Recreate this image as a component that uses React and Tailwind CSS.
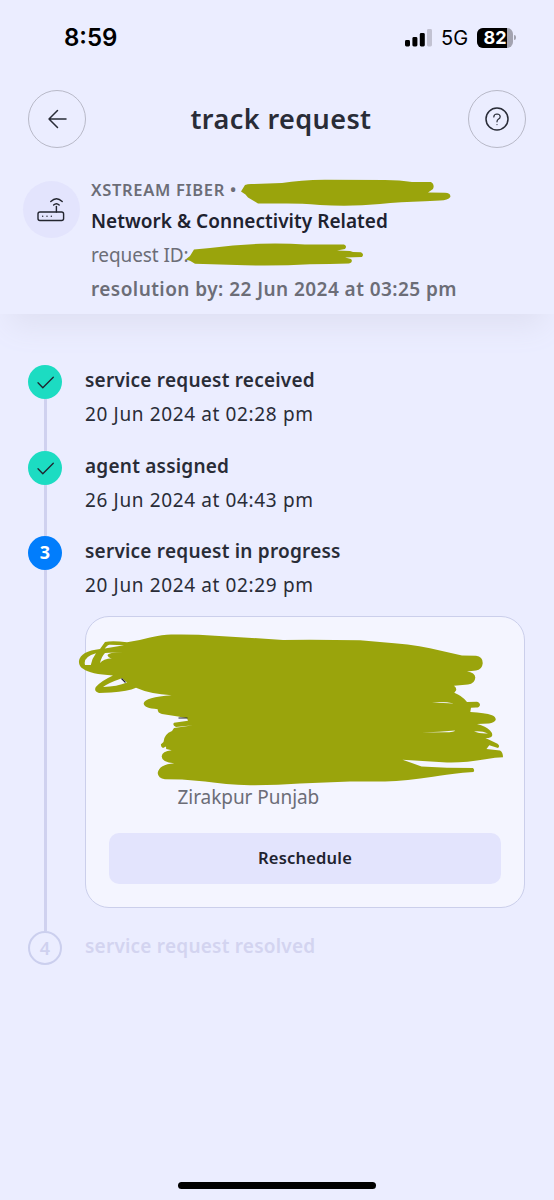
import React from 'react';

const STEPS = [
    { id: 1, state: 'done', title: 'service request received', date: '20 Jun 2024 at 02:28 pm' },
    { id: 2, state: 'done', title: 'agent assigned', date: '26 Jun 2024 at 04:43 pm' },
    { id: 3, state: 'active', title: 'service request in progress', date: '20 Jun 2024 at 02:29 pm' },
    { id: 4, state: 'pending', title: 'service request resolved' },
];

const StatusBar = () => (
    <div className="flex h-[74px] items-center justify-between pl-[64px] pr-[38px] pt-px font-['Inter',sans-serif] text-black">
        <span className="pt-px text-[24px] font-semibold leading-none">8:59</span>
        <div className="flex items-center">
            <svg className="h-[18px] w-[28px]" viewBox="0 0 28 18">
                <rect x="1" y="11" width="5" height="6.5" rx="1.4" />
                <rect x="8.4" y="8" width="5" height="9.5" rx="1.4" />
                <rect x="15.8" y="4" width="5" height="13.5" rx="1.4" />
                <rect x="23" y="0" width="5" height="17.5" rx="1.4" fill="#c2c2d2" />
            </svg>
            <span className="ml-[9px] w-[27px] pt-px text-[20px] leading-none">5G</span>
            <div className="ml-[9px] flex items-center">
                <div className="flex h-[20px] w-[36px] items-center overflow-hidden rounded-[6px] bg-[#a3a3b0]">
                    <div className="flex h-full w-[30px] items-center justify-center bg-black pl-[6px] text-[18px] font-bold leading-none text-white">82</div>
                </div>
                <div className="ml-[1px] h-[5px] w-[2px] rounded-r-full bg-[#a3a3b0]"></div>
            </div>
        </div>
    </div>
);

const RouterIcon = () => (
    <svg className="h-[28px] w-[30px]" viewBox="37 196 30 28" fill="none" stroke="#23252f" strokeWidth="1.4" strokeLinecap="round">
        <rect x="38" y="212" width="25.6" height="8.5" rx="2" />
        <path d="M56.4 206.5V212" />
        <path d="M53.6 205Q56.4 202.4 59.2 205" />
        <path d="M50.8 201.4Q56.5 195.9 62.2 201.4" />
        <path d="M42.7 216.2h.01M47 216.2h.01M51.3 216.2h.01" />
    </svg>
);

const StepMarker = ({ step }) => {
    if (step.state === 'done') {
        return (
            <div className="flex size-[34px] shrink-0 items-center justify-center rounded-full bg-[#1cdcc2]">
                <svg className="size-[34px]" viewBox="0 0 34 34" fill="none" stroke="#20242f" strokeWidth="1.3" strokeLinecap="round" strokeLinejoin="round">
                    <path d="M10 17.8L14.8 22.8L25.3 12.3" />
                </svg>
            </div>
        );
    }
    if (step.state === 'active') {
        return <div className="flex size-[34px] shrink-0 items-center justify-center rounded-full bg-[#017dfc] pb-px text-[18px] font-bold text-white">{step.id}</div>;
    }
    return <div className="flex size-[34px] shrink-0 items-center justify-center rounded-full border-2 border-[#cbcfee] text-[18px] font-semibold text-[#cfd1ef]">{step.id}</div>;
};

const AgentCard = () => (
    <div className="relative -mr-px mt-[14px] flex h-[292px] w-[440px] flex-col rounded-[24px] border-[1.5px] border-[#cbcfeb] bg-[#f4f5ff] px-[23px] pb-[23px]">
        <p className="mt-[166px] pl-[68.5px] text-[19px] leading-[28px] tracking-[-0.05px] text-[#6c6d77]">Zirakpur Punjab</p>
        <button className="mt-auto h-[51px] rounded-[10px] bg-[#e3e4fd] text-[16.5px] font-semibold tracking-[0.2px] text-[#20222f]">Reschedule</button>

        {/* Hidden agent details */}
        <svg className="absolute -left-[9px] top-[13.5px] h-[160px] w-[432px]" viewBox="77 630 432 160">
            <path
                fill="#9aa40c"
                d="M105 641Q112 639.5 127 641.2Q138 640 150 636.6Q163 633.6 171 633.6Q195 633.2 215 634.7L283 638.9Q320 638.4 360 639.3L380 641Q410 643 430 647.3L462 654.4L476 654.7Q483 655.5 482.7 662.5Q482 669 476 669.4L467 670.4Q475 671.5 475.3 676.5Q475 682.5 468 683.5L454 684.7Q457 687 456 689.5L454.3 691.7Q462 694.5 467 701L477 700.7Q480 701.5 480 704Q479.5 706.5 476 706.6L471 706.8L470.3 711Q485 711.8 492 714.2Q496 715.5 495.7 719Q494 722 489 722.4L477 723Q486 725.2 490 729.5Q493 732.5 492 735Q490.5 737.3 485.5 737L497.5 742.7Q500.5 745 498 747L489.3 744.3L486.5 748L500 749.5Q503 751 503 756.3Q495 756.3 487 757.9Q463 762 447 761.4L402.5 758.7L421.5 765.4L447 766.8L473 767Q475 769 473.5 770.9L463 771.7Q445 773.5 433 775.8Q407 780 385 780.5L350 780.4L300 782.4Q276 784.4 250 784.2Q225 783.5 205 780.5L182 778.4L165 778.3Q158 777.5 157.7 772Q159 763.5 174.3 762.3Q161.5 761 161.7 755.2Q162 750 171.7 749.2L166.2 748L166 745.4L163 747Q160.5 745.5 161 743.2L163.5 741Q164 733 172 730L174 727L193.3 724.3L176 726Q172 724 174 721.7L188 719.7L187 717.2L178 715.4L162 713Q157.5 712 157.7 708.2Q143.5 707.5 143.7 702.2Q145 696 171.7 694.2Q150 693 136 686.7Q128 690.3 111 691.6L99 692Q93.5 690 95.8 686Q101 680 113 674.5Q90 673 83.5 668Q78.5 665 79 660Q80.5 650 100 648Z"
            />
            <path fill="#f4f5ff" d="M85 664Q82.8 656 96 652.3Q92.3 657 90.8 664ZM104.7 647.6Q107.8 643.2 110 643.7L124 644.3ZM100 662Q101.5 655.5 105 652L123 651Q108 651.5 107.5 654Q108 657 112 657.2Q103 658 100 662ZM103 686Q108 682 122 677.2L127 681.5Q117 685.6 103 686ZM432 701.3Q444 700.3 454 702.4Q444 702.3 432 701.3ZM422 731.5Q440 731 455 729.4Q455 731 445 731.3ZM474 730.4Q482 729.6 488 732.4Q480 733 474 730.4Z" />
            <path stroke="#25262e" strokeWidth="1.2" d="M121.5 677.5L125.5 681.5M178.5 717H187.5" />
        </svg>
    </div>
);

const App = () => {
    return (
        <div className="flex h-[1200px] w-[554px] flex-col overflow-hidden bg-[#ebedff] font-['Noto_Sans',sans-serif] text-[#292c37]">
            <header className="h-[314px] shrink-0 shadow-[0_22px_28px_-10px_#dfe0f3]">
                <StatusBar />
                <div className="flex items-center justify-between px-[28px] pt-4">
                    <button className="flex size-[58px] items-center justify-center rounded-full border-[1.5px] border-[#b8b9c8]">
                        <svg className="size-[20px]" viewBox="0 0 20 20" fill="none" stroke="#292c37" strokeWidth="1.5" strokeLinecap="round" strokeLinejoin="round">
                            <path d="M10.5 1.5L2 10L10.5 18.5M2 10H19" />
                        </svg>
                    </button>
                    <h1 className="pb-[2px] pl-[8px] text-[27px] font-semibold leading-none tracking-[0.42px]">track request</h1>
                    <button className="flex size-[58px] items-center justify-center rounded-full border-[1.5px] border-[#b8b9c8]">
                        <svg className="size-[24px]" viewBox="0 0 24 24" fill="none" stroke="#292c37" strokeLinecap="round">
                            <circle cx="12" cy="12" r="11" strokeWidth="1.5" />
                            <path d="M8.8 10Q8.9 7 12 7Q15.2 7.1 15.2 9.7Q15.2 11.2 13.3 12.3Q12 13.1 12 14.8M12 17.5V17.6" strokeWidth="1.2" />
                        </svg>
                    </button>
                </div>

                {/* Request summary */}
                <div className="relative flex pl-[23px] pt-[25px]">
                    <div className="mt-[8px] flex size-[57px] items-center justify-center rounded-full bg-[#e3e4fd]">
                        <RouterIcon />
                    </div>
                    <div className="ml-[11px] whitespace-nowrap text-[19px] text-[#6c6d77]">
                        <p className="h-[32px] text-[16.5px] font-semibold leading-[34px] tracking-[0.68px]">XSTREAM FIBER •</p>
                        <p className="h-[33px] font-semibold leading-[32px] tracking-[0.03px] text-[#20222f]">Network &amp; Connectivity Related</p>
                        <p className="h-[34px] leading-[34px] tracking-[-0.1px]">request ID:</p>
                        <p className="h-[34px] font-semibold leading-[34px] tracking-[0.44px]">resolution by: 22 Jun 2024 at 03:25 pm</p>
                    </div>
                    <svg className="absolute left-[180px] top-[27px] h-[95px] w-[280px]" viewBox="180 175 280 95" fill="#9aa40c">
                        <path d="M241 191.5L245 185Q248 183.7 253 184L282 183Q300 180 325 179.8L385 180Q400 180 412 182L431 182Q435 184 433 189L428 192.6L445 192.8Q451 193 450.3 197Q448 200.3 440 200.4L425 201.3Q400 202 380 204Q350 207 320 205Q300 203.5 285 203.6L258 203.4L248 197.5L245.5 194.5Z" />
                        <path d="M185.5 259.5L190 256L194 249.5L210 248Q235 244.5 260 243.8Q285 243.2 305 244.5L344 244.4Q347.5 246 345 249L337 250.4L350 251L353 252L361 252.3Q364.5 254.3 362 257L345 257.5L351 259Q353.5 262 349 263.5Q330 264 310 264.3Q280 266 245 265.3L195 263.8L190 260.8Z" />
                    </svg>
                </div>
            </header>

            {/* Timeline */}
            <main className="flex flex-1 flex-col pl-[28px] pt-[51px]">
                {STEPS.map((step) => (
                    <div key={step.id} className="flex">
                        <div className="flex w-[34px] flex-col items-center">
                            <StepMarker step={step} />
                            {step.state !== 'pending' && <div className="ml-px w-[3px] flex-1 bg-[#cfd1ef]"></div>}
                        </div>
                        <div className={`ml-[23px] whitespace-nowrap text-[19px] ${step.state === 'active' ? 'pb-[23px]' : 'pb-[17.5px]'}`}>
                            <h2 className={`font-semibold tracking-[0.22px] ${step.state === 'pending' ? 'leading-[30px] text-[#d3d4f0]' : 'pb-[2px] leading-[30px]'}`}>{step.title}</h2>
                            {step.date && <p className={`leading-[34px] tracking-[0.63px] ${step.state === 'active' ? '' : 'pb-[2px]'}`}>{step.date}</p>}
                            {step.state === 'active' && <AgentCard />}
                        </div>
                    </div>
                ))}
            </main>

            <footer className="flex justify-center pb-[11px]">
                <div className="h-[7px] w-[198px] rounded-full bg-black"></div>
            </footer>
        </div>
    );
};

export default App;
